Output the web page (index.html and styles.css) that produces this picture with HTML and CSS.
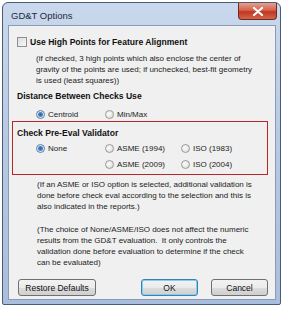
FILE: index.html
```html
<!DOCTYPE html>
<html lang="en">
<head>
    <meta charset="UTF-8">
    <title>GD&amp;T Options</title>
    <link rel="stylesheet" href="styles.css">
</head>
<body>
<div class="window">
    <div class="titlebar">
        <span class="title">GD&amp;T Options</span>
        <span class="close">
            <svg width="12" height="9" viewBox="0 0 12 9"><path d="M2 1 L10 8 M10 1 L2 8" stroke="#fff" stroke-width="2.2" stroke-linecap="round"/></svg>
        </span>
    </div>
    <div class="client">
        <!-- HIGH POINTS -->
        <div class="check-row">
            <span class="checkbox"></span>
            <span class="heading">Use High Points for Feature Alignment</span>
        </div>
        <p class="note first">(if checked, 3 high points which also enclose the center of<br>gravity of the points are used; if unchecked, best-fit geometry<br>is used (least squares))</p>

        <!-- DISTANCE -->
        <div class="heading section">Distance Between Checks Use</div>
        <div class="radio-row">
            <label class="opt"><span class="radio on"></span>Centroid</label>
            <label class="opt"><span class="radio"></span>Min/Max</label>
        </div>

        <!-- VALIDATOR -->
        <div class="validator">
            <div class="heading">Check Pre-Eval Validator</div>
            <div class="radio-grid">
                <label class="opt"><span class="radio on"></span>None</label>
                <label class="opt"><span class="radio"></span>ASME (1994)</label>
                <label class="opt"><span class="radio"></span>ISO (1983)</label>
                <span></span>
                <label class="opt"><span class="radio"></span>ASME (2009)</label>
                <label class="opt"><span class="radio"></span>ISO (2004)</label>
            </div>
        </div>
        <p class="note">(If an ASME or ISO option is selected, additional validation is<br>done before check eval according to the selection and this is<br>also indicated in the reports.)</p>
        <p class="note gap">(The choice of None/ASME/ISO does not affect the numeric<br>results from the GD&amp;T evaluation.&nbsp; It only controls the<br>validation done before evaluation to determine if the check<br>can be evaluated)</p>

        <div class="buttons">
            <button class="btn restore">Restore Defaults</button>
            <button class="btn ok">OK</button>
            <button class="btn cancel">Cancel</button>
        </div>
    </div>
</div>
</body>
</html>
```

FILE: styles.css
```css
html, body {
    margin: 0;
    padding: 0;
    background: #fff;
}

body {
    font-family: 'Liberation Sans', Arial, sans-serif;
    font-size: 8px;
    color: #222;
}

.window {
    margin: 2px 3px 0 2px;
    width: 279px;
    height: 303px;
    box-sizing: border-box;
    border: 1px solid #4a5c78;
    border-radius: 6px 6px 2px 2px;
    background: linear-gradient(to bottom, #c9d8ec 0%, #b9cbe3 40%, #a8bedc 100%);
    padding: 0 4px 4px 5px;
    display: flex;
    flex-direction: column;
}

.titlebar {
    height: 22px;
    display: flex;
    align-items: flex-start;
    justify-content: space-between;
}

.title {
    font-family: 'Liberation Sans', sans-serif;
    font-size: 9.5px;
    color: #1e2a3a;
    margin: 7px 0 0 3px;
}

.close {
    width: 37px;
    height: 16px;
    margin-right: -1px;
    border: 1px solid #6b2a25;
    border-top: none;
    border-radius: 0 0 4px 4px;
    background: linear-gradient(to bottom, #e5a08f 0%, #d4634d 45%, #c0371f 55%, #d3654b 100%);
    display: flex;
    align-items: center;
    justify-content: center;
}

.client {
    flex: 1;
    background: #f0f0f0;
    border: 1px solid #8a9bb5;
    padding: 9px 0 0 8px;
}

.check-row {
    display: flex;
    align-items: center;
    height: 14px;
}

.checkbox {
    width: 10px;
    height: 10px;
    box-sizing: border-box;
    border: 1px solid #8e8f8f;
    background: linear-gradient(135deg, #dcdcdc, #f8f8f8);
    margin-right: 3px;
}

.heading {
    font-weight: bold;
    font-size: 8.6px;
    line-height: 10px;
    color: #111;
}

.note {
    margin: 0;
    padding-left: 20px;
    white-space: nowrap;
    line-height: 11px;
}

.note.first {
    margin-top: 4px;
    padding-left: 19px;
}

.section {
    margin-top: 5px;
}

.radio-row {
    display: flex;
    margin-top: 7px;
    padding-left: 19px;
}

.radio-row .opt:first-child {
    width: 69px;
}

.opt {
    display: flex;
    align-items: center;
    height: 12px;
}

.radio {
    width: 9px;
    height: 9px;
    box-sizing: border-box;
    border-radius: 50%;
    border: 1px solid #9a9a9a;
    background: radial-gradient(circle at 40% 40%, #fdfdfd, #d6d6d6);
    margin-right: 3px;
}

.radio.on {
    border-color: #5d7ea8;
    background: radial-gradient(circle, #2c5f9c 0, #4d86c6 2px, #d9e6f3 3px, #eef2f7 100%);
}

.validator {
    margin: 1px 0 0 -5px;
    width: 256px;
    height: 54px;
    box-sizing: border-box;
    border: 1.5px solid #b8262b;
    padding: 6px 0 0 4px;
}

.radio-grid {
    display: grid;
    grid-template-columns: 69px 76px auto;
    grid-template-rows: 16px 16px;
    align-items: center;
    margin-top: 2px;
    padding-left: 19px;
}

.validator + .note {
    margin-top: 4px;
}

.note.gap {
    margin-top: 12px;
}

.buttons {
    display: flex;
    margin-top: 11px;
}

.btn {
    font-family: 'Liberation Sans', sans-serif;
    font-size: 8.5px;
    color: #111;
    height: 17px;
    padding: 0;
    border: 1px solid #707070;
    border-radius: 3px;
    background: linear-gradient(to bottom, #f2f2f2 0%, #ebebeb 50%, #dddddd 51%, #cfcfcf 100%);
}

.restore {
    width: 78px;
    margin-left: 1px;
}

.ok {
    width: 57px;
    margin-left: 45px;
    border-color: #3c7fb1;
    box-shadow: inset 0 0 0 1px #7fd0f3;
}

.cancel {
    width: 57px;
    margin-left: 13px;
}
```
